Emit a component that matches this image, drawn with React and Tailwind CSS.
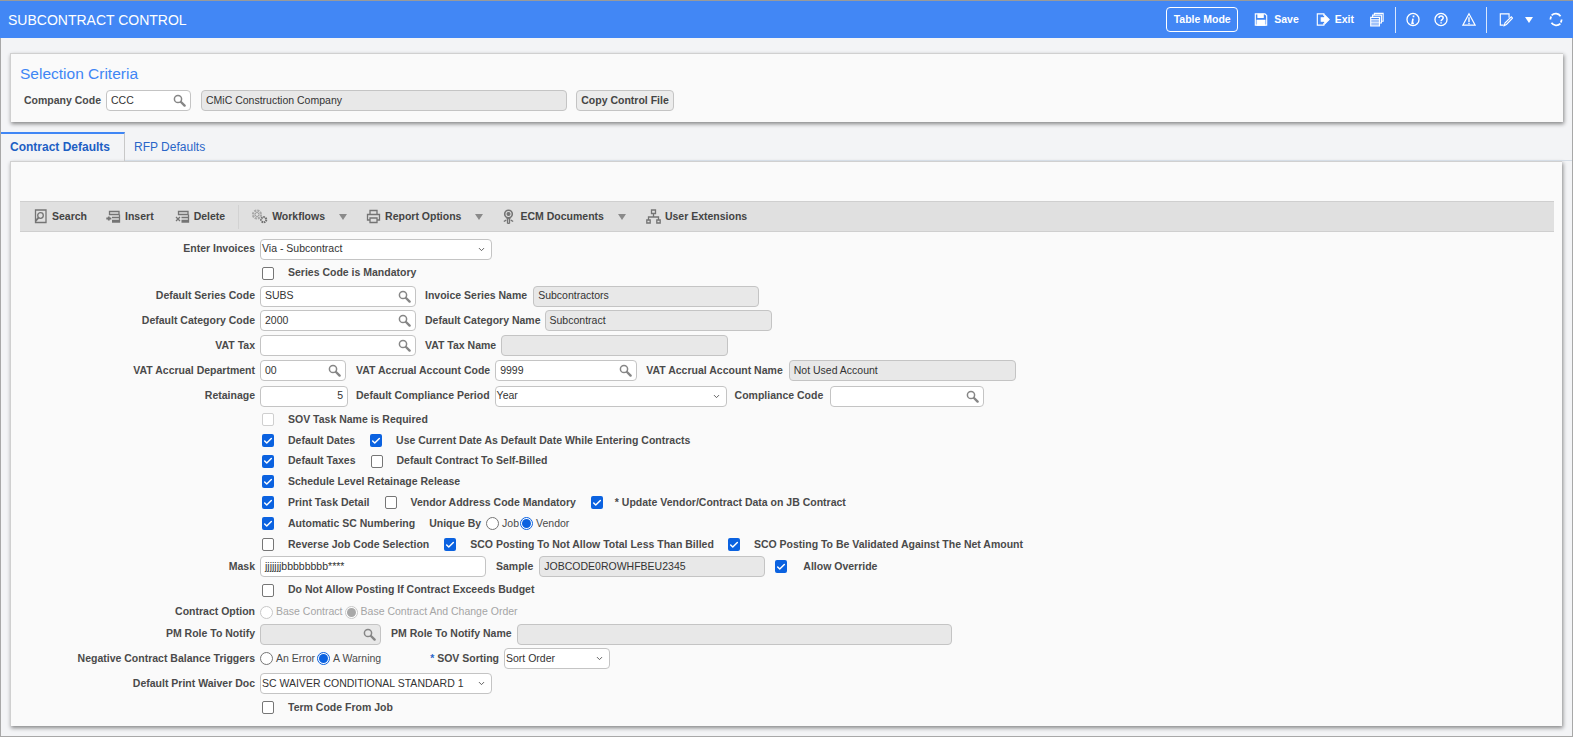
import React from 'react';
import { Check, ChevronDown } from 'lucide-react';

const labelCls = 'text-[10.5px] font-bold text-[#4a4a4a] whitespace-nowrap';

function Label({ w, children, className = '' }) {
  return <div className={`${labelCls} text-right shrink-0 ${className}`} style={{ width: w }}>{children}</div>;
}

function SearchGlyph() {
  return (
    <svg viewBox="0 0 13 13" className="w-[13px] h-[13px] shrink-0 text-[#868686]" fill="none" stroke="currentColor">
      <circle cx="5" cy="5" r="3.6" strokeWidth="1.5" />
      <path d="M8 8l3.6 3.6" strokeWidth="2.4" strokeLinecap="round" />
    </svg>
  );
}

function Input({ w, value = '', right = false, search = false, disabled = false }) {
  return (
    <div
      className={`h-[21px] shrink-0 rounded-[4px] border border-[#c4c4c4] flex items-center pl-[4px] pr-[4px] text-[10.5px] text-[#333] ${disabled ? 'bg-[#e8e8e8]' : 'bg-white'} ${right ? 'justify-end' : 'justify-between'}`}
      style={{ width: w }}
    >
      <span className="whitespace-nowrap">{value}</span>
      {search && <SearchGlyph />}
    </div>
  );
}

function Select({ w, value }) {
  return (
    <div
      className="h-[21px] shrink-0 rounded-[4px] border border-[#c4c4c4] bg-white flex items-center justify-between pl-[1px] pr-[5px] text-[10.5px] text-[#333]"
      style={{ width: w }}
    >
      <span className="whitespace-nowrap">{value}</span>
      <ChevronDown size={9} strokeWidth={2.5} className="text-[#555]" />
    </div>
  );
}

function Box({ on = false, disabled = false }) {
  if (on) {
    return (
      <span className="w-[12px] h-[13px] shrink-0 rounded-[2px] bg-[#0b62e0] flex items-center justify-center">
        <Check size={10} strokeWidth={3.5} className="text-white" />
      </span>
    );
  }
  return <span className={`w-[12px] h-[13px] shrink-0 rounded-[2px] border bg-white ${disabled ? 'border-[#cfcfcf]' : 'border-[#767676]'}`} />;
}

function CheckItem({ on, disabled, children, gap = 14, className = '' }) {
  return (
    <div className={`flex items-center shrink-0 ${className}`}>
      <Box on={on} disabled={disabled} />
      <span className={labelCls} style={{ marginLeft: gap }}>{children}</span>
    </div>
  );
}

function Radio({ on = false, disabled = false, children, className = 'mr-[2px]' }) {
  const ring = disabled ? 'border-[#c8c8c8]' : on ? 'border-[#0b62e0]' : 'border-[#767676]';
  return (
    <div className={`flex items-center shrink-0 ${className}`}>
      <span className={`w-[13px] h-[13px] rounded-full border bg-white flex items-center justify-center ${ring}`}>
        {on && <span className={`w-[9px] h-[9px] rounded-full ${disabled ? 'bg-[#a8a8a8]' : 'bg-[#0b62e0]'}`} />}
      </span>
      <span className={`ml-[3px] text-[10.5px] whitespace-nowrap ${disabled ? 'text-[#a5a5a5]' : 'text-[#4a4a4a]'}`}>{children}</span>
    </div>
  );
}

function Row({ h, label, children, className = '' }) {
  return (
    <div className={`flex items-center ${className}`} style={{ height: h }}>
      <Label w={235}>{label}</Label>
      <div className="ml-[5px] flex items-center">{children}</div>
    </div>
  );
}

const svgProps = { fill: 'none', stroke: 'currentColor', strokeWidth: 1.3 };

function ToolIcon({ name }) {
  const cls = 'w-[15px] h-[15px] text-[#747474] shrink-0';
  if (name === 'search') return (
    <svg viewBox="0 0 15 15" className={cls} {...svgProps}>
      <path d="M2.5 1h10.5v12.5H2.5z" /><circle cx="7.5" cy="6.5" r="2.8" /><path d="M5.5 8.7l-3 3.5" strokeWidth="1.8" />
    </svg>
  );
  if (name === 'insert') return (
    <svg viewBox="0 0 15 15" className={cls} {...svgProps}>
      <path d="M3.5 2.5h9.5v3H3.5zM6 8.5h7.5M6 11.5h7.5M13.5 5.5v7.5H6" /><path d="M.3 9.5h5M2.8 7.5v4" strokeWidth="1.8" />
    </svg>
  );
  if (name === 'delete') return (
    <svg viewBox="0 0 15 15" className={cls} {...svgProps}>
      <path d="M3.5 2.5h9.5v3H3.5zM6.5 8.5h7M6.5 11.5h7M13.5 5.5v7.5h-7" /><path d="M1 8l4 4M5 8l-4 4" />
    </svg>
  );
  if (name === 'gears') return (
    <svg viewBox="0 0 17 15" className="w-[17px] h-[15px] shrink-0" fill="none">
      <circle cx="6" cy="5.5" r="4" stroke="#a8a8a8" strokeWidth="2.2" strokeDasharray="2.2 .9" />
      <circle cx="6" cy="5.5" r="2" stroke="#8a8a8a" strokeWidth=".8" />
      <circle cx="12.7" cy="10.7" r="2.6" stroke="#6e6e6e" strokeWidth="2" strokeDasharray="1.6 .7" />
    </svg>
  );
  if (name === 'print') return (
    <svg viewBox="0 0 15 15" className={cls} {...svgProps}>
      <path d="M4 5.5v-4h7v4M4 11H1.5V5.5h12V11H11M4 9h7v4.5H4z" />
    </svg>
  );
  if (name === 'ecm') return (
    <svg viewBox="0 0 15 15" className={cls} {...svgProps}>
      <circle cx="7.5" cy="5" r="3.8" strokeWidth="1.6" /><circle cx="7.5" cy="5" r="1.4" fill="currentColor" />
      <path d="M5.5 9.5h4M6.5 9.5v4.5l1 .5 1-.5V9.5M2.8 12.5l2.4-1.4M12.2 12.5l-2.4-1.4" />
    </svg>
  );
  return (
    <svg viewBox="0 0 15 15" className={cls} {...svgProps}>
      <path d="M5.5 1h4v3.5h-4zM7.5 4.5V8M2.5 11V8h10v3M.8 11h3.4v3H.8zM10.8 11h3.4v3h-3.4z" />
    </svg>
  );
}

function ToolButton({ icon, children, caret = false, className = '' }) {
  return (
    <div className={`flex items-center shrink-0 ${className}`}>
      <ToolIcon name={icon} />
      <span className="ml-[4px] text-[10.5px] font-bold text-[#444] whitespace-nowrap">{children}</span>
      {caret && (
        <svg viewBox="0 0 8 6" className="w-[8px] h-[6px] ml-[14px] text-[#8a8a8a]">
          <path d="M0 0h8L4 6z" fill="currentColor" />
        </svg>
      )}
    </div>
  );
}

function HeaderIcon({ children, className = '' }) {
  return (
    <svg viewBox="0 0 16 16" className={`w-[14px] h-[15px] shrink-0 text-white ${className}`} fill="none" stroke="currentColor" strokeWidth="1.3">
      {children}
    </svg>
  );
}

function Header() {
  return (
    <div className="h-[38px] bg-[#4287f5] border-t border-[#9a9a9a] flex items-center pl-[8px] pr-[10px] shrink-0">
      <div className="text-[14px] text-white pt-[1px]">SUBCONTRACT CONTROL</div>
      <div className="ml-auto flex items-center text-white">
        <div className="h-[25px] w-[72px] rounded-[4px] border border-white flex items-center justify-center text-[10.5px] font-bold">Table Mode</div>
        <HeaderIcon className="ml-[16px]">
          <path d="M1.5 1.5h11l2 2v11h-13z" /><path d="M4.5 1.5v4h6v-4M3.5 9h9v5.5h-9z" fill="currentColor" />
        </HeaderIcon>
        <span className="ml-[6px] text-[10.5px] font-bold">Save</span>
        <HeaderIcon className="ml-[17px]">
          <path d="M9 4V1.5H1.5v13H9V12" /><path d="M6 6h4V3l5 5-5 5v-3H6z" fill="currentColor" />
        </HeaderIcon>
        <span className="ml-[5px] text-[10.5px] font-bold">Exit</span>
        <HeaderIcon className="ml-[16px]">
          <path d="M5 3V1h10v9h-2M3 5V3h10v9h-2" /><path d="M.8 5.5h10v9.8H.8zM.8 8.5h10M.8 11h10M.8 13.2h10" />
        </HeaderIcon>
        <div className="w-px h-[26px] bg-white/80 ml-[11px] mr-[10px]" />
        <HeaderIcon>
          <circle cx="8" cy="8" r="6.9" strokeWidth="1.5" /><path d="M8.6 3.3v2M8 7l-1 5.5h2" strokeWidth="1.9" />
        </HeaderIcon>
        <HeaderIcon className="ml-[14px]">
          <circle cx="8" cy="8" r="6.9" strokeWidth="1.5" /><path d="M5.7 6.3c0-3 4.8-3 4.8 0 0 1.8-2.4 1.8-2.4 3.6M8.1 11v1.7" strokeWidth="1.7" />
        </HeaderIcon>
        <HeaderIcon className="ml-[14px]">
          <path d="M8 1.5L15 14.5H1z" /><path d="M8 5.5v5.5M8 12v1.5" strokeWidth="1.6" />
        </HeaderIcon>
        <div className="w-px h-[26px] bg-white/80 ml-[10px] mr-[12px]" />
        <HeaderIcon>
          <path d="M11.5 6V1.5h-10v13h4" /><path d="M6 15l.8-3L14 5l1.5 1.5-7 7.2z" />
        </HeaderIcon>
        <svg viewBox="0 0 8 6" className="w-[8px] h-[6px] ml-[12px]"><path d="M0 0h8L4 6z" fill="#fff" /></svg>
        <HeaderIcon className="ml-[16px]">
          <path d="M13.2 4.2A6.6 6.6 0 0 0 3 3.3M2.8 11.8A6.6 6.6 0 0 0 13 12.7M1.6 8a6.4 6.4 0 0 1 1-3.4M14.4 8a6.4 6.4 0 0 1-1 3.4" strokeWidth="2" />
        </HeaderIcon>
      </div>
    </div>
  );
}

function SelectionCriteria() {
  return (
    <div className="ml-[9px] mr-[9px] mt-[15px] h-[69px] bg-[#fafafa] border-t border-l border-[#d0d0d0] shadow-[1px_2px_4px_rgba(0,0,0,0.45)] pl-[9px] pt-[11px]">
      <div className="text-[15.5px] leading-[17px] text-[#3f86f5]">Selection Criteria</div>
      <div className="mt-[8px] flex items-center">
        <div className={`${labelCls} ml-[4px]`}>Company Code</div>
        <div className="ml-[5px]"><Input w={85} value="CCC" search /></div>
        <div className="ml-[10px]"><Input w={366} value="CMiC Construction Company" disabled /></div>
        <div className="ml-[9px] h-[21px] w-[98px] rounded-[4px] border border-[#c4c4c4] bg-[#ececec] flex items-center justify-center text-[10.5px] font-bold text-[#444]">Copy Control File</div>
      </div>
    </div>
  );
}

function Tabs() {
  return (
    <div className="mt-[10px] h-[29px] flex items-stretch">
      <div className="w-[124px] border-t-2 border-r border-t-[#3f86f5] border-r-[#c8c8c8] flex items-center pl-[9px] pb-[2px] text-[12px] font-bold text-[#1d5fc4]">Contract Defaults</div>
      <div className="flex-1 flex items-center pl-[9px] pt-[1px] text-[12px] text-[#2a66c8] border-b border-[#d5dde6]">RFP Defaults</div>
    </div>
  );
}

function Toolbar() {
  return (
    <div className="mt-[39px] h-[31px] bg-[#e0e0e0] border-y border-[#cfcfcf] flex items-center pl-[13px]">
      <ToolButton icon="search">Search</ToolButton>
      <ToolButton icon="insert" className="ml-[19px]">Insert</ToolButton>
      <ToolButton icon="delete" className="ml-[21px]">Delete</ToolButton>
      <div className="w-px h-[24px] bg-[#d2d2d2] ml-[13px]" />
      <ToolButton icon="gears" caret className="ml-[12px]">Workflows</ToolButton>
      <ToolButton icon="print" caret className="ml-[19px]">Report Options</ToolButton>
      <ToolButton icon="ecm" caret className="ml-[18px]">ECM Documents</ToolButton>
      <ToolButton icon="ext" className="ml-[20px]">User Extensions</ToolButton>
    </div>
  );
}

function Form() {
  return (
    <div className="pt-[6px]">
      <Row h={22} label="Enter Invoices"><Select w={232} value="Via - Subcontract" /></Row>
      <Row h={24} label="" className="pt-[2px]"><div className="ml-[2px]"><CheckItem>Series Code is Mandatory</CheckItem></div></Row>
      <Row h={24} label="Default Series Code">
        <Input w={156} value="SUBS" search />
        <Label className="ml-[9px]">Invoice Series Name</Label>
        <div className="ml-[6px]"><Input w={226} value="Subcontractors" disabled /></div>
      </Row>
      <Row h={25} label="Default Category Code">
        <Input w={156} value="2000" search />
        <Label className="ml-[9px]">Default Category Name</Label>
        <div className="ml-[4px]"><Input w={227} value="Subcontract" disabled /></div>
      </Row>
      <Row h={25} label="VAT Tax">
        <Input w={156} search />
        <Label className="ml-[9px]">VAT Tax Name</Label>
        <div className="ml-[5px]"><Input w={227} disabled /></div>
      </Row>
      <Row h={25} label="VAT Accrual Department">
        <Input w={86} value="00" search />
        <Label className="ml-[10px]">VAT Accrual Account Code</Label>
        <div className="ml-[5px]"><Input w={142} value="9999" search /></div>
        <Label className="ml-[9px]">VAT Accrual Account Name</Label>
        <div className="ml-[6px]"><Input w={227} value="Not Used Account" disabled /></div>
      </Row>
      <Row h={26} label="Retainage">
        <Input w={88} value="5" right />
        <Label className="ml-[8px]">Default Compliance Period</Label>
        <div className="ml-[5px]"><Select w={232} value="Year" /></div>
        <Label className="ml-[8px]">Compliance Code</Label>
        <div className="ml-[7px]"><Input w={154} search /></div>
      </Row>
      <Row h={21} label=""><div className="ml-[2px]"><CheckItem disabled>SOV Task Name is Required</CheckItem></div></Row>
      <Row h={21} label="">
        <div className="ml-[2px] flex items-center">
          <CheckItem on>Default Dates</CheckItem>
          <CheckItem on className="ml-[15px]">Use Current Date As Default Date While Entering Contracts</CheckItem>
        </div>
      </Row>
      <Row h={20} label="">
        <div className="ml-[2px] flex items-center">
          <CheckItem on>Default Taxes</CheckItem>
          <CheckItem className="ml-[15px]">Default Contract To Self-Billed</CheckItem>
        </div>
      </Row>
      <Row h={21} label=""><div className="ml-[2px]"><CheckItem on>Schedule Level Retainage Release</CheckItem></div></Row>
      <Row h={21} label="">
        <div className="ml-[2px] flex items-center">
          <CheckItem on>Print Task Detail</CheckItem>
          <CheckItem className="ml-[15px]">Vendor Address Code Mandatory</CheckItem>
          <CheckItem on gap={12} className="ml-[15px]">* Update Vendor/Contract Data on JB Contract</CheckItem>
        </div>
      </Row>
      <Row h={21} label="">
        <div className="ml-[2px] flex items-center">
          <CheckItem on>Automatic SC Numbering</CheckItem>
          <span className={`${labelCls} ml-[14px] mr-[5px]`}>Unique By</span>
          <Radio className="mr-[1px]">Job</Radio>
          <Radio on>Vendor</Radio>
        </div>
      </Row>
      <Row h={21} label="">
        <div className="ml-[2px] flex items-center">
          <CheckItem>Reverse Job Code Selection</CheckItem>
          <CheckItem on className="ml-[15px]">SCO Posting To Not Allow Total Less Than Billed</CheckItem>
          <CheckItem on className="ml-[14px]">SCO Posting To Be Validated Against The Net Amount</CheckItem>
        </div>
      </Row>
      <Row h={23} label="Mask">
        <Input w={226} value="jjjjjjjbbbbbbbb****" />
        <Label className="ml-[10px]">Sample</Label>
        <div className="ml-[6px]"><Input w={226} value="JOBCODE0ROWHFBEU2345" disabled /></div>
        <CheckItem on gap={16} className="ml-[10px]">Allow Override</CheckItem>
      </Row>
      <Row h={24} label=""><div className="ml-[2px]"><CheckItem>Do Not Allow Posting If Contract Exceeds Budget</CheckItem></div></Row>
      <Row h={20} label="Contract Option">
        <Radio disabled>Base Contract</Radio>
        <Radio on disabled>Base Contract And Change Order</Radio>
      </Row>
      <Row h={24} label="PM Role To Notify">
        <Input w={121} search disabled />
        <Label className="ml-[10px]">PM Role To Notify Name</Label>
        <div className="ml-[5px]"><Input w={435} disabled /></div>
      </Row>
      <Row h={25} label="Negative Contract Balance Triggers">
        <Radio>An Error</Radio>
        <Radio on>A Warning</Radio>
        <Label className="ml-[47px]"><span className="text-[#2a66c8]">*</span> SOV Sorting</Label>
        <div className="ml-[5px]"><Select w={106} value="Sort Order" /></div>
      </Row>
      <Row h={25} label="Default Print Waiver Doc"><Select w={232} value="SC WAIVER CONDITIONAL STANDARD 1" /></Row>
      <Row h={23} label=""><div className="ml-[2px]"><CheckItem>Term Code From Job</CheckItem></div></Row>
    </div>
  );
}

export default function App() {
  return (
    <div className="w-[1573px] h-[737px] overflow-hidden bg-[#f3f4f6] flex flex-col font-['Liberation_Sans',Arial,sans-serif]">
      <Header />
      <div className="flex-1 border-l border-r border-b border-[#a8a8a8]">
        <SelectionCriteria />
        <Tabs />
        <div className="ml-[9px] mr-[10px] h-[565px] bg-[#fafafa] border-t border-l border-[#d0d0d0] shadow-[1px_2px_4px_rgba(0,0,0,0.45)] pl-[9px] pr-[8px] overflow-hidden">
          <Toolbar />
          <Form />
        </div>
      </div>
    </div>
  );
}
